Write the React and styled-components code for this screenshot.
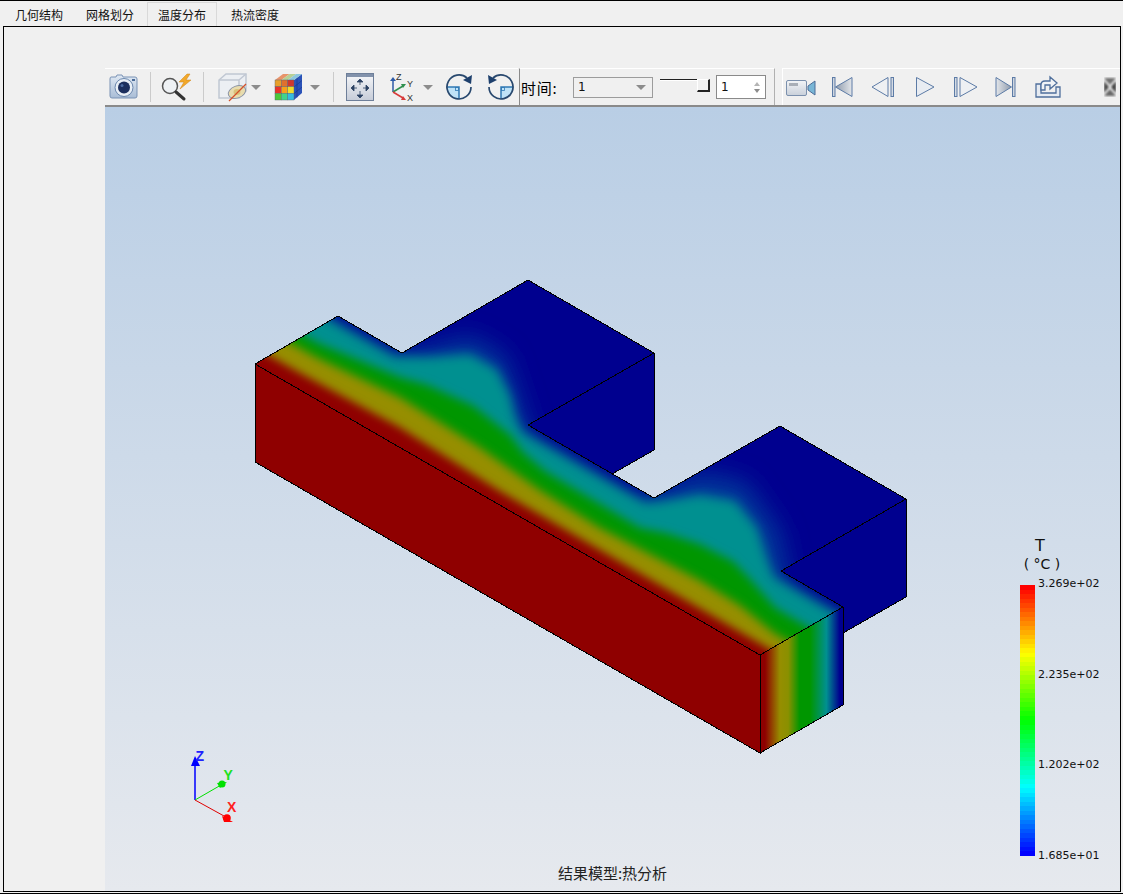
import React from 'react';
import styled, { createGlobalStyle } from 'styled-components';

const CJK = '"Noto Sans CJK SC", "Noto Sans", sans-serif';

const GlobalStyle = createGlobalStyle`
  html, body {
    margin: 0;
    padding: 0;
    background: #f0f0f0;
  }
`;

const Window = styled.div`
  width: 1123px;
  height: 894px;
  box-sizing: border-box;
  display: flex;
  flex-direction: column;
  background: #f0f0f0;
  border-top: 1px solid #000;
  border-bottom: 1px solid #000;
  overflow: hidden;
  font-family: ${CJK};
`;

const TabBar = styled.div`
  height: 25px;
  display: flex;
  padding-left: 3px;
  flex-shrink: 0;
`;

const Tab = styled.div`
  width: ${props => props.$w}px;
  margin-left: ${props => props.$ml || 0}px;
  box-sizing: border-box;
  display: flex;
  align-items: center;
  justify-content: center;
  font-size: 12px;
  color: #111;
  margin-top: 1px;
  ${props => props.$active && `
    border: 1px solid #d9d9d9;
    border-bottom: none;
    background: #f0f0f0;
  `}
`;

const Panel = styled.div`
  flex: 1;
  min-height: 0;
  margin: 0 2px 1px 3px;
  border: 1px solid #000;
  padding: 41px 0 0 101px;
  display: flex;
  flex-direction: column;
`;

const Toolbar = styled.div`
  height: 39px;
  flex-shrink: 0;
  display: flex;
  box-sizing: border-box;
  border-bottom: 2px solid #8a8a8a;
`;

const ToolGroup = styled.div`
  display: flex;
  align-items: center;
  box-sizing: border-box;
  width: ${props => props.$w}px;
  border-top: 1px solid #fff;
  background: #f0f0f0;
`;

const TimeGroup = styled(ToolGroup)`
  border-left: 1px solid #8a8a8a;
  border-right: 1px solid #b0b0b0;
  margin-left: 1px;
`;

const PlayGroup = styled(ToolGroup)`
  margin-left: 7px;
  border-left: 1px solid #fff;
  flex: 1;
  width: auto;
`;

const Slot = styled.div`
  width: ${props => props.$w || 32}px;
  height: 32px;
  margin-left: ${props => props.$ml || 0}px;
  flex-shrink: 0;
  display: flex;
  align-items: center;
  justify-content: center;
`;

const Sep = styled.div`
  width: 1px;
  height: 30px;
  margin-left: ${props => props.$ml || 0}px;
  flex-shrink: 0;
  background: #cbcbcb;
`;

const TimeLabel = styled.span`
  margin-left: 1px;
  width: 52px;
  font-size: 15px;
  letter-spacing: 0.8px;
  color: #000;
  white-space: nowrap;
`;

const Combo = styled.div`
  width: 80px;
  height: 21px;
  box-sizing: border-box;
  border: 1px solid #9c9c9c;
  display: flex;
  align-items: center;
  justify-content: space-between;
  padding: 0 6px 0 4px;
  font-family: "DejaVu Sans", sans-serif;
  font-size: 12px;
  color: #111;
`;

const Caret = styled.div`
  width: 0;
  height: 0;
  border-left: ${props => props.$size || 5}px solid transparent;
  border-right: ${props => props.$size || 5}px solid transparent;
  border-top: ${props => props.$size || 5}px solid #8c8c8c;
`;

const Slider = styled.div`
  width: 50px;
  height: 14px;
  margin: -2px 0 0 7px;
  display: flex;
  align-items: flex-start;
`;

const SliderLine = styled.div`
  flex: 1;
  height: 2px;
  box-sizing: border-box;
  border-top: 1px solid #222;
  border-bottom: 1px solid #fff;
`;

const SliderHandle = styled.div`
  width: 13px;
  height: 13px;
  box-sizing: border-box;
  border-top: 1px solid #fff;
  border-left: 1px solid #fff;
  border-right: 2px solid #222;
  border-bottom: 2px solid #222;
`;

const Spin = styled.div`
  width: 50px;
  height: 24px;
  margin-left: 6px;
  box-sizing: border-box;
  border: 1px solid #8a8a8a;
  background: #fff;
  display: flex;
  align-items: center;
  justify-content: space-between;
  padding: 0 5px 0 4px;
  font-family: "DejaVu Sans", sans-serif;
  font-size: 12px;
  color: #111;
`;

const SpinArrows = styled.div`
  display: flex;
  flex-direction: column;
  gap: 3px;
`;

const SpinUp = styled.div`
  width: 0;
  height: 0;
  border-left: 3px solid transparent;
  border-right: 3px solid transparent;
  border-bottom: 4px solid #b5b5b5;
`;

const SpinDown = styled(SpinUp)`
  border-bottom: none;
  border-top: 4px solid #8c8c8c;
`;

const Viewport = styled.div`
  position: relative;
  flex: 1;
  min-height: 0;
  overflow: hidden;
  background: linear-gradient(180deg, #b9cee5 0%, #e6e9ee 100%);
`;

const Scene = styled.svg`
  position: absolute;
  inset: 0;
  width: 100%;
  height: 100%;
`;

const AxisText = styled.text`
  font-family: "Liberation Sans", sans-serif;
  font-size: 14px;
  font-weight: 700;
  fill: ${props => props.$color};
`;

const Legend = styled.div`
  position: absolute;
  left: 915px;
  top: 431px;
  font-family: "DejaVu Sans", sans-serif;
  color: #111;
`;

const LegendName = styled.div`
  width: 40px;
  font-size: 16px;
  line-height: 16px;
  text-align: center;
  color: #111;
`;

const LegendUnit = styled.div`
  width: 44px;
  font-size: 14px;
  line-height: 18px;
  padding-top: 1px;
  margin-bottom: -1px;
  text-align: center;
  white-space: pre;
  color: #111;
`;

const LegendBody = styled.div`
  display: flex;
  margin-top: 13px;
`;

const ColorBar = styled.div`
  width: 15px;
  height: 271px;
  display: flex;
  flex-direction: column;
`;

const Band = styled.div`
  flex: 1;
`;

const Ticks = styled.div`
  height: 286px;
  margin: -8px 0 0 3px;
  display: flex;
  flex-direction: column;
  justify-content: space-between;
  font-size: 11px;
  line-height: 14px;
  white-space: nowrap;
`;

const Caption = styled.div`
  position: absolute;
  left: 0;
  right: 0;
  bottom: 7px;
  text-align: center;
  font-size: 15px;
  line-height: 22px;
  color: #222;
`;

const Stroke = '#5c7ba6';

const GradDefs = ({ id, from, to }) => (
  <defs>
    <linearGradient id={id} x1="0" y1="0" x2="1" y2="0">
      <stop offset="0" stopColor={from} />
      <stop offset="1" stopColor={to} />
    </linearGradient>
  </defs>
);

const CameraIcon = () => (
  <svg width="32" height="32" viewBox="0 0 32 32">
    <defs>
      <linearGradient id="camBody" x1="0" y1="0" x2="0" y2="1">
        <stop offset="0" stopColor="#dfe8f3" />
        <stop offset="1" stopColor="#a9bdd6" />
      </linearGradient>
    </defs>
    <path d="M3 6h5l1-2h5l1 2h12q2 0 2 2v17q0 2-2 2H4q-2 0-2-2V8q0-2 1-2z" fill="url(#camBody)" stroke="#7b93b5" />
    <rect x="24" y="8" width="3" height="2" fill="#4a6a96" />
    <circle cx="16" cy="16.500" r="9" fill="#e9eff6" stroke="#6b87ad" />
    <circle cx="16" cy="16.500" r="6" fill="#1c2f5e" />
    <circle cx="14" cy="14.500" r="1.500" fill="#4d6ca3" />
  </svg>
);

const SearchBoltIcon = () => (
  <svg width="32" height="32" viewBox="0 0 32 32">
    <circle cx="9" cy="15" r="7.500" fill="#eef1f4" stroke="#555" strokeWidth="1.500" />
    <path d="M15 21l8 7" stroke="#333" strokeWidth="3" strokeLinecap="round" />
    <path d="M26 3l-8 8h5l-4 7 11-9h-5l4-6z" fill="#f2a829" stroke="#cf8418" strokeWidth="0.500" />
  </svg>
);

const SectionCubeIcon = () => (
  <svg width="32" height="32" viewBox="0 0 32 32">
    <path d="M3 9l7-6h20v17l-7 7H3z" fill="#eceff3" stroke="#c0c7d2" strokeWidth="1.500" />
    <path d="M3 9h20v18M23 9l7-6" fill="none" stroke="#c0c7d2" strokeWidth="1.500" />
    <ellipse cx="21" cy="21" rx="9" ry="6" transform="rotate(-20 21 21)" fill="#e8dcae" stroke="#8a93a5" />
    <ellipse cx="21" cy="21" rx="3.500" ry="3" fill="#d9c27a" />
    <path d="M13 30L30 13" stroke="#d4502a" strokeWidth="1.300" />
  </svg>
);

const frontCells = [
  ['#e8a02a', '#e0702e', '#d0382e'],
  ['#e8322a', '#f8a01a', '#f0dc2c'],
  ['#4cc83a', '#3fd48c', '#35bce0'],
];

const ColorCubeIcon = () => (
  <svg width="32" height="32" viewBox="0 0 32 32">
    <path d="M20 9l8-6v19l-8 7z" fill="#2a52b8" />
    <path d="M23 6.500v20M20 16l8-6.500M20 22.500l8-6.500" stroke="#14307c" strokeWidth="0.500" />
    <path d="M1 9l8-6h6.500l-8 6z" fill="#e8946a" />
    <path d="M7.500 9l8-6H22l-8 6z" fill="#b6d095" />
    <path d="M14 9l8-6h6l-8 6z" fill="#8cc6de" />
    {frontCells.map((row, r) => row.map((c, i) => (
      <rect key={`${r}-${i}`} x={1 + i * 6.330} y={9 + r * 6.670} width="6.330" height="6.670" fill={c} stroke="#55606f" strokeWidth="0.400" />
    )))}
  </svg>
);

const FitIcon = () => (
  <svg width="32" height="32" viewBox="0 0 32 32">
    <defs>
      <linearGradient id="fitBg" x1="0" y1="0" x2="0" y2="1">
        <stop offset="0" stopColor="#f7f8fa" />
        <stop offset="1" stopColor="#c6ccd8" />
      </linearGradient>
    </defs>
    <rect x="2.500" y="2.500" width="27" height="27" fill="url(#fitBg)" stroke="#6e7f99" />
    <rect x="3" y="3" width="26" height="3" fill="#8292ab" />
    <g fill="#2c4263" stroke="#2c4263" strokeWidth="0.800">
      <path d="M16 8l3 3h-6zM16 27l3-3h-6zM7 17l3-3v6zM25 17l-3-3v6z" />
      <path d="M16 11v3M16 20v4M10 17h3M19 17h3" fill="none" />
    </g>
  </svg>
);

const AxesIcon = () => (
  <svg width="32" height="32" viewBox="0 0 32 32">
    <path d="M9 21V9" stroke="#2c5aa8" strokeWidth="1.500" />
    <path d="M9 6l3 4H6z" fill="#2c5aa8" />
    <path d="M9 21l10-6" stroke="#2f8f4e" strokeWidth="1.500" />
    <path d="M22 13l-5 0 2 4z" fill="#2f8f4e" />
    <path d="M9 21l10 6" stroke="#d83a3a" strokeWidth="1.500" />
    <path d="M22 29l-5 0 2-4z" fill="#d83a3a" />
    <text x="12" y="9" fontFamily="Liberation Sans" fontSize="9" fill="#333">Z</text>
    <text x="23" y="16" fontFamily="Liberation Sans" fontSize="9" fill="#333">Y</text>
    <text x="23" y="30" fontFamily="Liberation Sans" fontSize="9" fill="#333">X</text>
  </svg>
);

const RotateIcon = ({ flip }) => (
  <svg width="32" height="32" viewBox="0 0 32 32">
    <g transform={flip ? 'translate(32 0) scale(-1 1)' : undefined}>
      <path d="M16 16H4A12 12 0 0 0 16 28z" fill="#bfe2f7" />
      <path d="M4 16h12v12" fill="none" stroke="#2f78b4" strokeWidth="1.500" />
      <rect x="12.500" y="16.500" width="3" height="3" fill="none" stroke="#2f78b4" strokeWidth="0.800" />
      <path d="M24 7A12 12 0 1 0 28 16" fill="none" stroke="#28486e" strokeWidth="1.700" />
      <path d="M29 4l-1 9-8-4z" fill="#1d3f6c" />
    </g>
  </svg>
);

const VideoIcon = () => (
  <svg width="32" height="32" viewBox="0 0 32 32">
    <defs>
      <linearGradient id="vidBody" x1="0" y1="0" x2="0" y2="1">
        <stop offset="0" stopColor="#f2f4f7" />
        <stop offset="1" stopColor="#c9d0da" />
      </linearGradient>
    </defs>
    <rect x="1.500" y="9.500" width="20" height="15" rx="1.500" fill="url(#vidBody)" stroke="#7b90ad" />
    <rect x="4" y="12" width="9" height="3" fill="#a8aeb7" />
    <path d="M23 15l7-5v14l-7-5z" fill="#79b6d6" stroke="#4d6d98" />
  </svg>
);

const FirstIcon = () => (
  <svg width="32" height="32" viewBox="0 0 32 32">
    <GradDefs id="gFirst" from="#8f9bac" to="#e3e6ea" />
    <rect x="6.500" y="6.500" width="2.500" height="19" fill="#cfd6df" stroke={Stroke} />
    <path d="M9.500 16L26 6.500v19z" fill="url(#gFirst)" stroke={Stroke} />
  </svg>
);

const PrevIcon = () => (
  <svg width="32" height="32" viewBox="0 0 32 32">
    <path d="M5 16L21 6.500v19z" fill="#eef0f3" stroke={Stroke} />
    <rect x="24" y="6.500" width="2.500" height="19" fill="#d5dbe3" stroke={Stroke} />
  </svg>
);

const PlayIcon = () => (
  <svg width="32" height="32" viewBox="0 0 32 32">
    <path d="M7.500 6.500L25 16 7.500 25.500z" fill="#e8ecf2" stroke={Stroke} />
  </svg>
);

const NextIcon = () => (
  <svg width="32" height="32" viewBox="0 0 32 32">
    <rect x="5.500" y="6.500" width="2.500" height="19" fill="#d5dbe3" stroke={Stroke} />
    <path d="M11 6.500L28 16 11 25.500z" fill="#eef0f3" stroke={Stroke} />
  </svg>
);

const LastIcon = () => (
  <svg width="32" height="32" viewBox="0 0 32 32">
    <GradDefs id="gLast" from="#e3e6ea" to="#8f9bac" />
    <path d="M6 6.500L21.500 16 6 25.500z" fill="url(#gLast)" stroke={Stroke} />
    <rect x="22.500" y="6.500" width="2.500" height="19" fill="#cfd6df" stroke={Stroke} />
  </svg>
);

const ExportIcon = () => (
  <svg width="32" height="32" viewBox="0 0 32 32">
    <path d="M5 13h5v9h15v-6h4v10H5z" fill="#e6ebf2" stroke="#4f6f9c" strokeWidth="1.300" />
    <path d="M10 19v-5q0-4 4-4h5V6l7 6-7 6v-4h-5v5z" fill="#f0f3f7" stroke="#4f6f9c" strokeWidth="1.300" />
  </svg>
);

const GripIcon = () => (
  <svg width="12" height="20" viewBox="0 0 12 20">
    <defs>
      <filter id="gripSoft"><feGaussianBlur stdDeviation="0.800" /></filter>
    </defs>
    <g filter="url(#gripSoft)">
      <path d="M0 1h12L6 8z" fill="#6e6e6e" />
      <path d="M0 19h12L6 12z" fill="#666" />
      <path d="M0 4l5 6-5 6z" fill="#4a4a4a" />
      <path d="M12 4L7 10l5 6z" fill="#3c3c3c" />
    </g>
  </svg>
);

// vertical height above the long front edge of the part
const frontY = x => 364 + 0.5764 * (x - 255);

const isoBand = pts =>
  [...pts.map(([x, h]) => `${x},${(frontY(x) - h).toFixed(1)}`), '900,900', '230,900'].join(' ');

const LAYERS = [
  {
    color: '#00389a', blur: 'blurWide',
    pts: [[230, 86], [395, 92], [430, 118], [470, 152], [505, 152], [522, 112], [530, 90], [640, 90], [665, 114], [700, 148], [745, 165], [780, 135], [790, 90], [900, 86]],
  },
  {
    color: '#009090', blur: 'blurTeal',
    pts: [[230, 86], [395, 88], [430, 108], [470, 134], [497, 134], [510, 116], [515, 98], [522, 86], [645, 86], [660, 96], [700, 126], [735, 140], [757, 126], [767, 100], [774, 86], [900, 85]],
  },
  {
    color: '#009600', blur: 'blurBand',
    pts: [[230, 56], [317, 57], [400, 70], [427, 78], [473, 84], [510, 76], [523, 66], [545, 60], [640, 58], [667, 68], [700, 76], [733, 78], [750, 70], [775, 56], [900, 54]],
  },
  {
    color: '#968e00', blur: 'blurBand',
    pts: [[230, 40], [317, 42], [400, 50], [480, 46], [540, 38], [600, 35], [700, 40], [740, 38], [775, 30], [900, 30]],
  },
  {
    color: '#8f0000', blur: 'blurRed',
    pts: [[230, 16], [300, 17], [400, 20], [500, 14], [600, 13], [700, 12], [900, 10]],
  },
];

const TOP_FACE = '255,364 338,316 402,353 528,280 654,353 528,425 654,498 780,426 906,499 781,571 843,607 760,655';

const Model = () => (
  <g>
    <defs>
      <clipPath id="topClip"><polygon points={TOP_FACE} /></clipPath>
      <filter id="blurWide" x="-20%" y="-20%" width="140%" height="140%"><feGaussianBlur stdDeviation="12" /></filter>
      <filter id="blurTeal" x="-20%" y="-20%" width="140%" height="140%"><feGaussianBlur stdDeviation="5.500" /></filter>
      <filter id="blurBand" x="-20%" y="-20%" width="140%" height="140%"><feGaussianBlur stdDeviation="5" /></filter>
      <filter id="blurRed" x="-20%" y="-20%" width="140%" height="140%"><feGaussianBlur stdDeviation="4" /></filter>
      <linearGradient id="endFace" x1="760" y1="0" x2="843" y2="0" gradientUnits="userSpaceOnUse">
        <stop offset="0.06" stopColor="#8f0000" />
        <stop offset="0.24" stopColor="#968e00" />
        <stop offset="0.34" stopColor="#8a9000" />
        <stop offset="0.48" stopColor="#009600" />
        <stop offset="0.6" stopColor="#009600" />
        <stop offset="0.8" stopColor="#009090" />
        <stop offset="0.96" stopColor="#00008f" />
      </linearGradient>
    </defs>
    <polygon points="528,425 654,353 654,450 612,474" fill="#00008f" />
    <polygon points="781,571 906,499 906,597 843,633 843,607" fill="#00008f" />
    <polygon points="255,364 760,655 760,753 255,462" fill="#8f0000" />
    <polygon points="760,655 843,607 843,705 760,753" fill="url(#endFace)" />
    <polygon points={TOP_FACE} fill="#00008f" />
    <g clipPath="url(#topClip)">
      {LAYERS.map(l => (
        <polygon key={l.color} points={isoBand(l.pts)} fill={l.color} filter={`url(#${l.blur})`} />
      ))}
    </g>
    <g fill="none" stroke="#000" strokeWidth="1" shapeRendering="crispEdges">
      <polygon points={TOP_FACE} />
      <polyline points="654,353 654,450 612,474" />
      <polyline points="906,499 906,597 843,633" />
      <polyline points="255,364 255,462 760,753 760,655" />
      <polyline points="760,753 843,705 843,607" />
    </g>
  </g>
);

const Triad = () => (
  <g>
    <path d="M195 800V762" stroke="#0000ff" strokeWidth="1.500" />
    <path d="M195 756l5 10h-9z" fill="#0000ff" />
    <path d="M195 800l26-15" stroke="#00e000" strokeWidth="1" />
    <path d="M227 782l-7 6-3-5z" fill="#00e000" />
    <circle cx="222" cy="784" r="3.500" fill="#00e000" />
    <path d="M195 800l29 16" stroke="#e00000" strokeWidth="1" />
    <circle cx="227" cy="818" r="3.800" fill="#ff0000" />
    <path d="M222 816l11 6h-9z" fill="#ff0000" />
    <AxisText x="195.500" y="761" $color="#2020ff">Z</AxisText>
    <AxisText x="223.500" y="780" $color="#20e020">Y</AxisText>
    <AxisText x="227" y="812" $color="#ff2020">X</AxisText>
  </g>
);

const BAND_COUNT = 60;

// rainbow from red at the top to blue at the bottom
const bandColor = t => {
  const stops = [[255, 0, 0], [255, 255, 0], [0, 255, 0], [0, 255, 255], [0, 0, 255]];
  const p = t * 4;
  const i = Math.min(3, Math.floor(p));
  const f = p - i;
  const c = stops[i].map((v, k) => Math.round(v + (stops[i + 1][k] - v) * f));
  return `rgb(${c.join(',')})`;
};

const bands = Array.from({ length: BAND_COUNT }, (_, i) => bandColor(i / (BAND_COUNT - 1)));
const ticks = ['3.269e+02', '2.235e+02', '1.202e+02', '1.685e+01'];
const tabs = [
  { label: '几何结构', w: 72 },
  { label: '网格划分', w: 70 },
  { label: '温度分布', w: 70, ml: 2, active: true },
  { label: '热流密度', w: 72, ml: 2 },
];

export default function App() {
  return (
    <>
      <GlobalStyle />
      <Window>
        <TabBar>
          {tabs.map(t => (
            <Tab key={t.label} $w={t.w} $ml={t.ml} $active={t.active}>{t.label}</Tab>
          ))}
        </TabBar>
        <Panel>
          <Toolbar>
            <ToolGroup $w={413}>
              <Slot $ml={3}><CameraIcon /></Slot>
              <Sep $ml={10} />
              <Slot $ml={10}><SearchBoltIcon /></Slot>
              <Sep $ml={10} />
              <Slot $ml={12}><SectionCubeIcon /></Slot>
              <Slot $w={12} $ml={2}><Caret $size={5.5} /></Slot>
              <Slot $ml={12}><ColorCubeIcon /></Slot>
              <Slot $w={12} $ml={3}><Caret $size={5.5} /></Slot>
              <Sep $ml={12} />
              <Slot $ml={10}><FitIcon /></Slot>
              <Slot $ml={8}><AxesIcon /></Slot>
              <Slot $w={12} $ml={6}><Caret $size={5.5} /></Slot>
              <Slot $ml={9}><RotateIcon /></Slot>
              <Slot $ml={10}><RotateIcon flip /></Slot>
            </ToolGroup>
            <TimeGroup $w={256}>
              <TimeLabel>时间:</TimeLabel>
              <Combo>1<Caret /></Combo>
              <Slider><SliderLine /><SliderHandle /></Slider>
              <Spin>1<SpinArrows><SpinUp /><SpinDown /></SpinArrows></Spin>
            </TimeGroup>
            <PlayGroup>
              <Slot $ml={2}><VideoIcon /></Slot>
              <Slot $ml={9}><FirstIcon /></Slot>
              <Slot $ml={9}><PrevIcon /></Slot>
              <Slot $ml={10}><PlayIcon /></Slot>
              <Slot $ml={8}><NextIcon /></Slot>
              <Slot $ml={9}><LastIcon /></Slot>
              <Slot $ml={9}><ExportIcon /></Slot>
              <Slot $w={12} $ml={41}><GripIcon /></Slot>
            </PlayGroup>
          </Toolbar>
          <Viewport>
            <Scene viewBox="105 107 1015 784">
              <Model />
              <Triad />
            </Scene>
            <Legend>
              <LegendName>T</LegendName>
              <LegendUnit>( °C )</LegendUnit>
              <LegendBody>
                <ColorBar>
                  {bands.map((c, i) => <Band key={i} style={{ background: c }} />)}
                </ColorBar>
                <Ticks>
                  {ticks.map(t => <span key={t}>{t}</span>)}
                </Ticks>
              </LegendBody>
            </Legend>
            <Caption>结果模型:热分析</Caption>
          </Viewport>
        </Panel>
      </Window>
    </>
  );
}
